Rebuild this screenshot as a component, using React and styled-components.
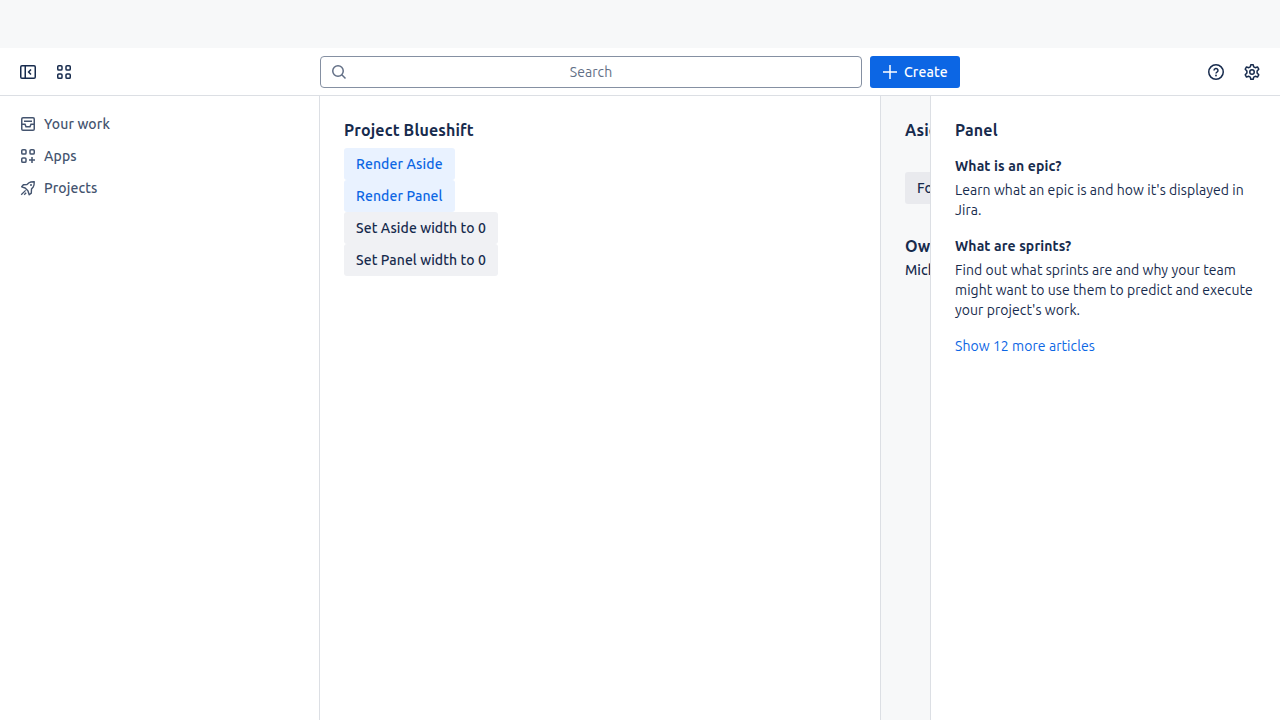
import React from 'react';
import styled, { createGlobalStyle } from 'styled-components';

const Global = createGlobalStyle`
  *, *::before, *::after { box-sizing: border-box; }
  html, body { margin: 0; background: #fff; }
  body, button {
    font-family: Ubuntu, "Noto Sans", sans-serif;
    font-size: 14px;
    line-height: 20px;
    letter-spacing: 0.065px;
    color: #172b4d;
  }
  h2, h3, p { margin: 0; }
`;

const Page = styled.div`
  height: 720px;
  display: flex;
  flex-direction: column;
  overflow: hidden;
`;
const Banner = styled.div`
  flex: 0 0 48px;
  background: #f7f8f9;
`;
const TopBar = styled.header`
  flex: 0 0 48px;
  display: grid;
  grid-template-columns: 304px 640px 1fr;
  align-items: center;
  padding: 0 12px 0 16px;
  border-bottom: 1px solid #dcdfe4;
`;
const IconGroup = styled.div`
  display: flex;
  gap: 4px;
  justify-content: ${(p) => (p.$end ? 'flex-end' : 'flex-start')};
  margin-left: ${(p) => (p.$end ? '0' : '-4px')};
`;
const IconButton = styled.button`
  width: 32px;
  height: 32px;
  display: grid;
  place-items: center;
  padding: 0;
  border: 0;
  background: transparent;
`;
const Center = styled.div`
  display: flex;
  gap: 8px;
`;
const SearchBox = styled.div`
  flex: 1;
  height: 32px;
  display: flex;
  align-items: center;
  padding: 0 10px;
  border: 1px solid #8590a2;
  border-radius: 4px;
  color: #626f86;
`;
const SearchLabel = styled.span`
  flex: 1;
  text-align: center;
  padding-right: 16px;
`;
const CreateButton = styled.button`
  width: 90px;
  height: 32px;
  display: flex;
  align-items: center;
  gap: 6px;
  padding: 0 12px;
  border: 0;
  border-radius: 3px;
  background: #0c66e4;
  color: #fff;
  font-weight: 500;
  letter-spacing: 0.12px;
`;
const Body = styled.div`
  flex: 1;
  min-height: 0;
  display: grid;
  grid-template-columns: 320px 560px 50px 350px;
`;
const SideNav = styled.nav`
  border-right: 1px solid #dcdfe4;
  padding: 12px 12px;
`;
const NavItem = styled.div`
  height: 32px;
  display: flex;
  align-items: center;
  gap: 8px;
  padding: 0 8px;
  color: #44546f;
  font-weight: 500;
  letter-spacing: 0.12px;
`;
const Main = styled.main`
  padding: 24px;
  display: flex;
  flex-direction: column;
  align-items: flex-start;
`;
const Heading = styled.h2`
  font-size: 16px;
  font-weight: 700;
  letter-spacing: 0.15px;
  line-height: 20px;
  white-space: nowrap;
  margin-top: ${(p) => p.$top || 0}px;
  margin-bottom: ${(p) => p.$gap || 0}px;
`;
const Button = styled.button`
  height: 32px;
  padding: 0 12px;
  border: 0;
  border-radius: 3px;
  white-space: nowrap;
  font-weight: 500;
  letter-spacing: ${(p) => (p.$selected ? 0.11 : 0.08)}px;
  color: ${(p) => (p.$selected ? '#0c66e4' : '#172b4d')};
  background: ${(p) => (p.$selected ? '#e9f2ff' : '#f0f1f4')};
`;
const Aside = styled.aside`
  overflow: hidden;
  padding: 24px 0 24px 24px;
  border-left: 1px solid #dcdfe4;
  background: #f7f8f9;
`;
const FollowButton = styled(Button)`
  display: block;
  background: #e9eaee;
`;
const Person = styled.p`
  margin-top: 4px;
  font-weight: 500;
  white-space: nowrap;
`;
const Panel = styled.section`
  padding: 24px 20px 24px 24px;
  border-left: 1px solid #dcdfe4;
`;
const Article = styled.article`
  margin-top: 16px;
`;
const ArticleTitle = styled.h3`
  font-size: 14px;
  font-weight: 700;
  letter-spacing: 0.13px;
  line-height: 20px;
  margin-bottom: 4px;
`;
const MoreLink = styled.a`
  display: block;
  margin-top: 16px;
  color: #0c66e4;
`;

const Icon = ({ children }) => (
  <svg width="16" height="16" viewBox="0 0 16 16" fill="none" stroke="currentColor" strokeWidth="1.5">
    {children}
  </svg>
);
const CollapseIcon = () => (
  <Icon>
    <rect x="0.75" y="1.75" width="14.5" height="12.5" rx="1.25" />
    <path d="M5.25 2v12M11 5.5 8.6 8 11 10.5" />
  </Icon>
);
const GridIcon = () => (
  <Icon>
    <rect x="1.75" y="1.75" width="4.25" height="4.25" rx="1.1" />
    <rect x="10" y="1.75" width="4.25" height="4.25" rx="1.1" />
    <rect x="1.75" y="10" width="4.25" height="4.25" rx="1.1" />
    <rect x="10" y="10" width="4.25" height="4.25" rx="1.1" />
  </Icon>
);
const SearchIcon = () => (
  <Icon>
    <circle cx="7" cy="7" r="5.25" />
    <path d="m10.8 10.8 3.7 3.7" />
  </Icon>
);
const PlusIcon = () => (
  <Icon>
    <path d="M8 1v14M1 8h14" />
  </Icon>
);
const HelpIcon = () => (
  <Icon>
    <circle cx="8" cy="8" r="7.25" />
    <path d="M6 6.5a2 1.9 0 1 1 3 1.6c-.7.4-1 .7-1 1.4" />
    <circle cx="8" cy="11.5" r="0.9" fill="currentColor" stroke="none" />
  </Icon>
);
const GearIcon = () => (
  <Icon>
    <circle cx="8" cy="8" r="2.25" />
    <path strokeLinejoin="round" d="M6.8.75h2.4l.5 2.1 1.5.85 2.3-.75 1.25 2.2L13.1 7v2l1.65 1.85-1.25 2.2-2.3-.75-1.5.85-.5 2.1H6.8l-.5-2.1-1.5-.85-2.3.75-1.25-2.2L2.9 9V7L1.25 5.15l1.25-2.2 2.3.75 1.5-.85z" />
  </Icon>
);
const InboxIcon = () => (
  <Icon>
    <rect x="1.75" y="1.75" width="12.5" height="12.5" rx="1.25" />
    <path d="M4 5.25h8M1.75 8.25H5l1 2.5h4l1-2.5h3.25" />
  </Icon>
);
const AppsIcon = () => (
  <Icon>
    <rect x="1.75" y="1.75" width="4.25" height="4.25" rx="1.1" />
    <rect x="10" y="1.75" width="4.25" height="4.25" rx="1.1" />
    <rect x="1.75" y="10" width="4.25" height="4.25" rx="1.1" />
    <path d="M12 9v6M9 12h6" />
  </Icon>
);
const RocketIcon = () => (
  <Icon>
    <path
      strokeLinejoin="round"
      strokeWidth="1.4"
      d="M7 4.5 9 2.8C10.4 1.8 12 1.7 14.25 1.75 14.3 4 14.2 5.6 13.2 7l-1.7 2-.2 4.1-2.1 1.7-1.3-4-2.8-2.8-3.4-1.2 1.7-2.1z"
    />
    <path d="M5.6 10.4 1.2 14.8M6.2 12.8 4.2 14.8" strokeWidth="1.3" />
    <circle cx="11" cy="5" r="1" fill="currentColor" stroke="none" />
  </Icon>
);

export default function App() {
  return (
    <Page>
      <Global />
      <Banner />
      <TopBar>
        <IconGroup>
          <IconButton aria-label="Collapse sidebar"><CollapseIcon /></IconButton>
          <IconButton aria-label="Switch apps"><GridIcon /></IconButton>
        </IconGroup>
        <Center>
          <SearchBox>
            <SearchIcon />
            <SearchLabel>Search</SearchLabel>
          </SearchBox>
          <CreateButton><PlusIcon />Create</CreateButton>
        </Center>
        <IconGroup $end>
          <IconButton aria-label="Help"><HelpIcon /></IconButton>
          <IconButton aria-label="Settings"><GearIcon /></IconButton>
        </IconGroup>
      </TopBar>
      <Body>
        <SideNav>
          <NavItem><InboxIcon />Your work</NavItem>
          <NavItem><AppsIcon />Apps</NavItem>
          <NavItem><RocketIcon />Projects</NavItem>
        </SideNav>
        <Main>
          <Heading $gap={8}>Project Blueshift</Heading>
          <Button $selected>Render Aside</Button>
          <Button $selected>Render Panel</Button>
          <Button>Set Aside width to 0</Button>
          <Button>Set Panel width to 0</Button>
        </Main>
        <Aside>
          <Heading $gap={32}>Aside</Heading>
          <FollowButton>Follow</FollowButton>
          <Heading $top={32}>Owner</Heading>
          <Person>Michael</Person>
        </Aside>
        <Panel>
          <Heading>Panel</Heading>
          <Article>
            <ArticleTitle>What is an epic?</ArticleTitle>
            <p>Learn what an epic is and how it's displayed in Jira.</p>
          </Article>
          <Article>
            <ArticleTitle>What are sprints?</ArticleTitle>
            <p>
              Find out what sprints are and why your team might want to use them
              to predict and execute your project's work.
            </p>
          </Article>
          <MoreLink>Show 12 more articles</MoreLink>
        </Panel>
      </Body>
    </Page>
  );
}
